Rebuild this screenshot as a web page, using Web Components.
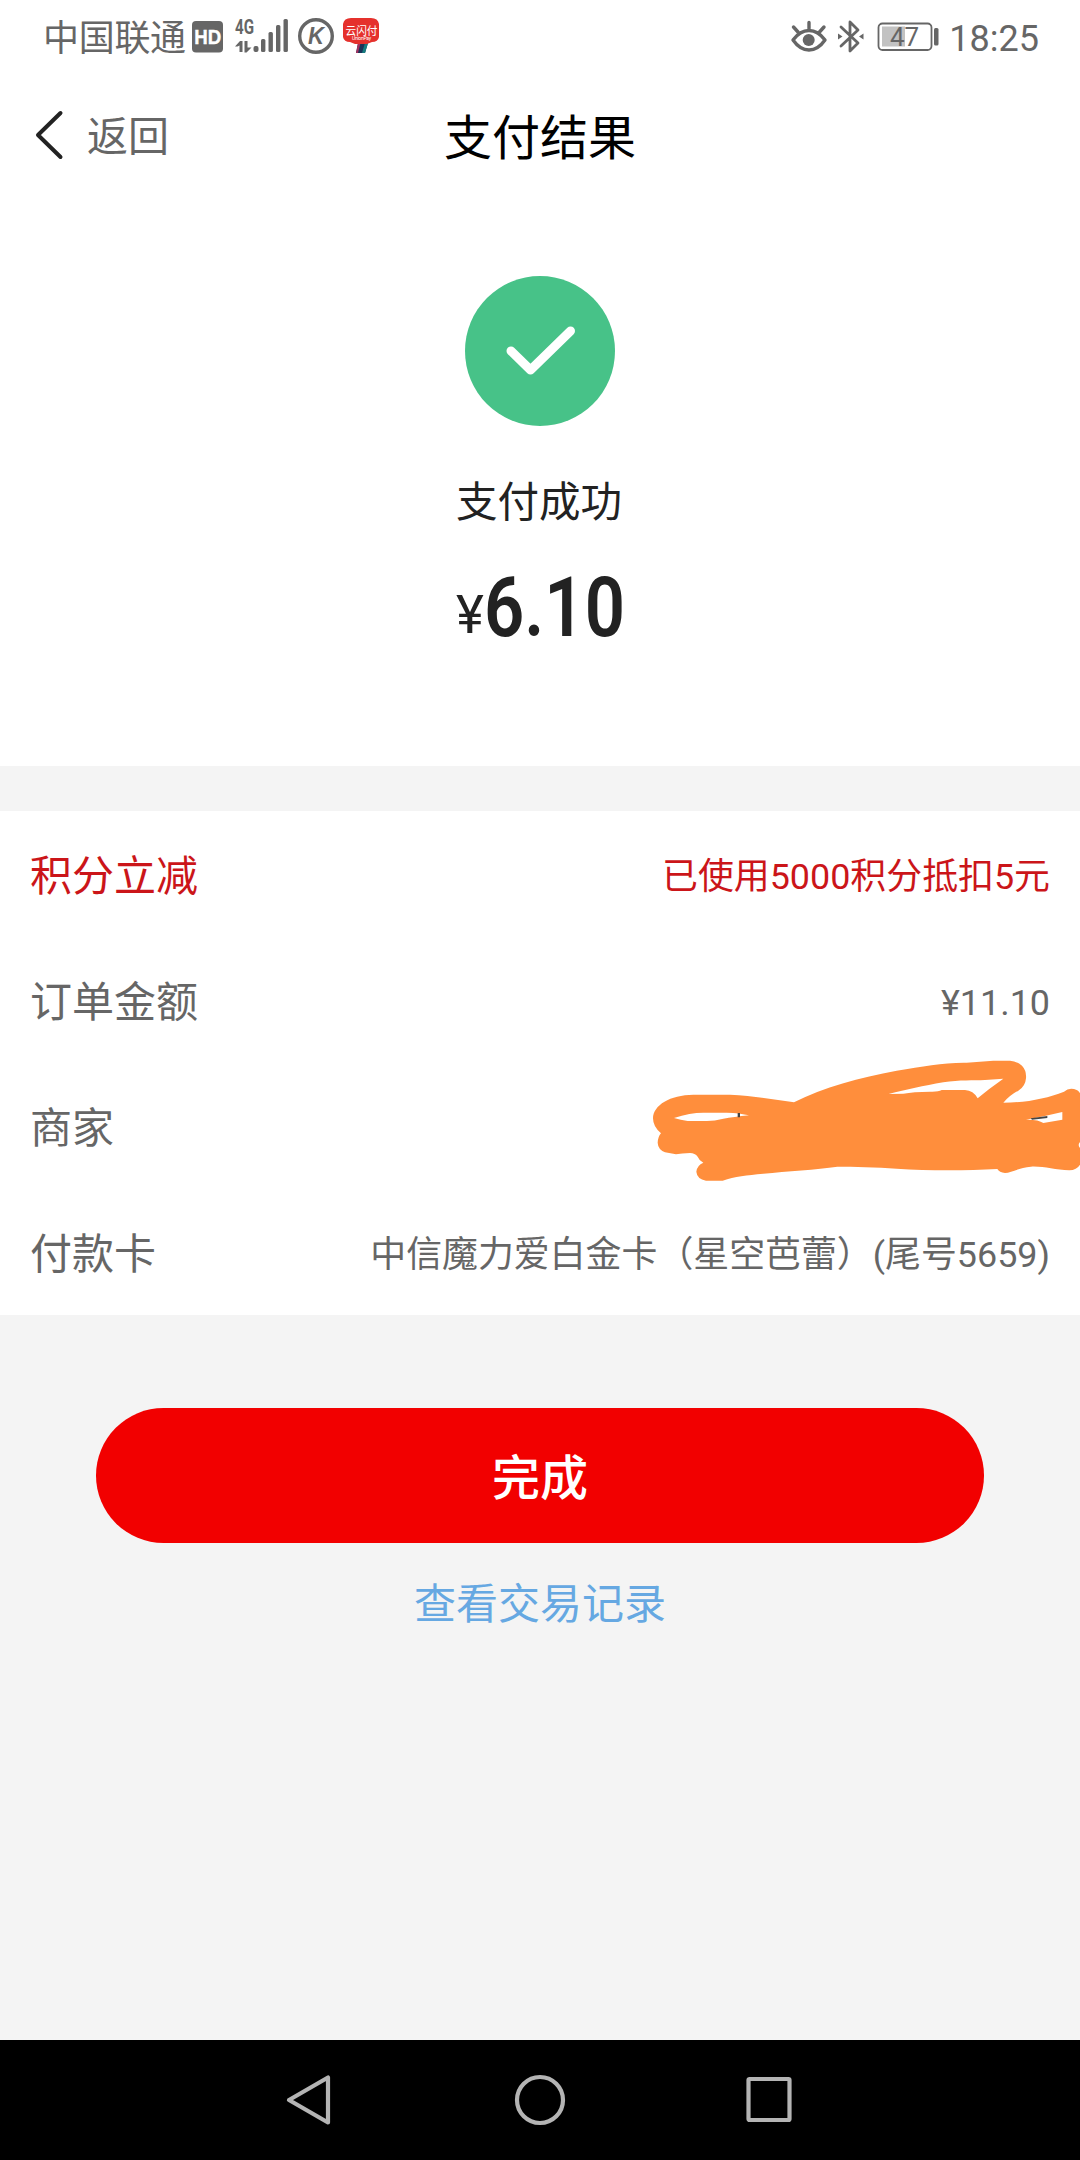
<!DOCTYPE html>
<html lang="zh-CN">
<head>
<meta charset="utf-8">
<title>支付结果</title>
<style>
  html, body { margin:0; }
  body {
    width:1080px;
    background:#f4f4f4;
    font-family:Roboto,"Noto Sans CJK SC",sans-serif;
    color:#666;
  }
</style>
</head>
<body>
<pay-screen></pay-screen>

<script>
const define = (name, html) => {
  const tpl = document.createElement("template");
  tpl.innerHTML = html;
  customElements.define(name, class extends HTMLElement {
    constructor(){
      super();
      this.attachShadow({ mode:"open" }).append(tpl.content.cloneNode(true));
    }
  });
};

define("status-bar", `
  <style>
    :host{
      display:flex;
      justify-content:space-between;
      align-items:center;
      box-sizing:border-box;
      height:74px;
      padding:0 41px 0 43px;
      font-size:36px;
      line-height:74px;
      color:#666;
    }
    .side{ display:flex; align-items:center; height:74px; }
    .side span{ padding-top:3px; }
    svg{ display:block; flex:none; }
    .carrier{ width:142px; letter-spacing:-.3px; white-space:nowrap; }
    .icons{ margin-left:5px; }
  </style>
  <div class="side">
    <span class="carrier">中国联通</span>
    <svg class="icons" width="192" height="74" viewBox="190 0 192 74" fill="#666">
      <rect x="192" y="21" width="31" height="31.500" rx="4"/>
      <text x="207.700" y="44" text-anchor="middle" textLength="27" lengthAdjust="spacingAndGlyphs" fill="#fff" stroke="#fff" stroke-width=".4" font-family="Liberation Sans" font-weight="700" font-size="21">HD</text>
      <text x="235" y="34" textLength="19" lengthAdjust="spacingAndGlyphs" font-weight="700" font-size="20">4G</text>
      <path d="M235 46.500l5-5.500h2.500v11h-3v-6.500l-2 1zM244.500 41h3v6.500h4l-5 5h-2z"/>
      <rect x="253.500" y="46" width="5" height="6" rx="2"/>
      <rect x="261" y="39" width="4.400" height="13" rx="1.500"/>
      <rect x="268.500" y="32" width="4.400" height="20" rx="1.500"/>
      <rect x="276" y="25" width="4.400" height="27" rx="1.500"/>
      <rect x="283.500" y="19" width="4.400" height="33" rx="1.500"/>
      <circle cx="316" cy="36" r="16.300" fill="none" stroke="#666" stroke-width="3.400"/>
      <text x="316" y="44.300" text-anchor="middle" font-family="Liberation Sans" font-weight="700" font-style="italic" font-size="23" textLength="16" lengthAdjust="spacingAndGlyphs">K</text>
      <path d="M358 43h10l-3 10h-9z" fill="#1b3358"/>
      <path d="M358 43h2.500l-2.500 10h-2z" fill="#a3305f"/>
      <path d="M365 43h3l-3 10h-3z" fill="#167c80"/>
      <path d="M351 18h20q7 0 8 6v13q-1 5-7 5l-5 2h-12l-5-2q-6 0-7-5V24q1-6 8-6z" fill="#e5312d"/>
      <text x="361.500" y="34.500" text-anchor="middle" textLength="32" lengthAdjust="spacingAndGlyphs" fill="#fff" font-weight="400" font-size="11.500">云闪付</text>
      <text x="361.500" y="40" text-anchor="middle" fill="#fff" font-size="5" textLength="19">UnionPay</text>
    </svg>
  </div>
  <div class="side">
    <svg width="160" height="74" viewBox="789 0 160 74" fill="none" stroke="#666" stroke-linecap="round" stroke-linejoin="round">
      <path d="M793 40q7-9.500 16-9.500t16 9.500q-7 10-16 10t-16-10z" stroke-width="3.400"/>
      <circle cx="808.700" cy="40" r="6" fill="#666" stroke="none"/>
      <path d="M809 22.500v6M793.500 27l4.500 5M824 27l-4.500 5" stroke-width="3.400"/>
      <path d="M841 27l17 16-8 8V22l8 8-17 16" stroke-width="2.800"/>
      <path d="M838 33.500l4.500 3-4.500 3zM863.500 33.500l-4.500 3 4.500 3z" fill="#666" stroke="none"/>
      <rect x="878.500" y="23.500" width="53" height="26.500" rx="4" stroke-width="1.800"/>
      <rect x="882" y="26.500" width="23" height="20" fill="#c2c2c2" stroke="none"/>
      <rect x="934" y="28" width="4.500" height="17.500" rx="1.500" fill="#666" stroke="none"/>
      <text x="904.500" y="46" text-anchor="middle" fill="#666" stroke="none" font-size="26">47</text>
    </svg>
    <span>18:25</span>
  </div>
`);

define("nav-header", `
  <style>
    :host{
      display:grid;
      grid-template-columns:1fr auto 1fr;
      align-items:center;
      height:126px;
    }
    .back{
      display:flex;
      align-items:center;
      gap:23px;
      padding-left:34px;
      font-size:41px;
      line-height:63px;
    }
    .back svg{ margin-bottom:4px; }
    .back slot{ display:block; }
    h1{
      margin:0;
      padding-top:2px;
      font-size:48px;
      font-weight:400;
      line-height:63px;
      color:#000;
    }
  </style>
  <div class="back">
    <svg width="30" height="52" viewBox="0 0 30 52" fill="none" stroke="#222" stroke-width="4" stroke-linecap="round" stroke-linejoin="round">
      <path d="M26.500 4L4 26l22.500 22"/>
    </svg>
    <slot name="back"></slot>
  </div>
  <h1><slot></slot></h1>
`);

define("pay-result", `
  <style>
    :host{
      display:flex;
      flex-direction:column;
      align-items:center;
      box-sizing:border-box;
      height:566px;
      padding-top:76px;
      color:#222;
    }
    svg{ display:block; }
    .state{
      margin-top:47px;
      font-size:41.500px;
      line-height:60px;
      padding-right:2px;
    }
    .amount{
      display:flex;
      align-items:flex-start;
      margin-top:25px;
      height:100px;
      line-height:100px;
    }
    .sign{
      width:28px;
      padding-left:1px;
      font-size:53px;
      line-height:115px;
    }
    /* the figures are set narrow, like a DIN face */
    .num{
      width:141px;
      font-size:84px;
      font-weight:600;
      transform:scaleX(.84);
      transform-origin:left;
    }
  </style>
  <svg width="150" height="150" viewBox="0 0 150 150">
    <circle cx="75" cy="75" r="75" fill="#47c288"/>
    <path d="M46 75l19.500 19L105.500 55" fill="none" stroke="#fff" stroke-width="9" stroke-linecap="round" stroke-linejoin="round"/>
  </svg>
  <div class="state"><slot></slot></div>
  <div class="amount">
    <span class="sign">¥</span>
    <span class="num"><slot name="amount"></slot></span>
  </div>
`);

define("detail-row", `
  <style>
    :host{
      position:relative;
      display:flex;
      justify-content:space-between;
      align-items:center;
      box-sizing:border-box;
      height:126px;
      padding:5px 30px 0;
      font-size:35.900px;
      line-height:60px;
    }
    :host([accent]){ color:#cb1519; }
    .label{ font-size:42px; }
  </style>
  <span class="label"><slot name="label"></slot></span>
  <slot></slot>
`);

define("marker-scribble", `
  <style>
    :host{
      position:absolute;
      right:0;
      top:-23px;
      width:450px;
      height:160px;
    }
    svg{ display:block; }
  </style>
  <svg width="450" height="160" viewBox="0 0 1350 480">
    <path fill="#ff8e3c" d="M69 235C70 195 120 165 190 164H300C370 167 430 179 492 187C580 142 690 112 800 92C880 79 940 67 1010 68L1090 62H1140Q1160 64 1176 77Q1190 92 1188 115Q1186 140 1165 152Q1140 165 1120 188C1190 188 1250 175 1302 155Q1315 143 1332 147Q1345 150 1350 160V306Q1342 315 1350 324V374Q1340 390 1318 391C1275 390 1240 378 1203 380C1170 382 1145 398 1125 399Q1108 398 1102 387C1010 392 900 393 800 386C740 381 670 380 622 380C560 389 470 394 400 401C350 406 315 409 278 422H228Q201 417 199 395Q201 376 220 368Q207 361 203 350Q195 339 180 339Q155 340 138 343L105 337Q84 328 83 308Q84 290 93 280Q69 260 69 235z"/>
    <path fill="#fff" d="M132 234Q180 218 220 218H290Q330 219 357 226Q310 231 280 236Q250 244 225 243H173Q152 240 132 234zM776 162C830 148 880 138 940 127C990 119 1030 122 1065 120L1120 116Q1078 145 1043 175Q1030 151 1005 150H935Q925 156 900 155Q850 155 820 161zM1188 239Q1240 230 1297 216V239L1240 249Q1225 238 1188 239z"/>
    <path fill="#444" d="M323 219h7v13h-7zM1202 235l50-7v6l-46 5z"/>
  </svg>
`);

define("pay-actions", `
  <style>
    :host{
      display:flex;
      flex-direction:column;
      align-items:center;
      box-sizing:border-box;
      height:725px;
      padding-top:93px;
    }
    button{
      width:888px;
      height:135px;
      padding:0 0 4px;
      border:0;
      border-radius:68px;
      background:#f20000;
      color:#fff;
      font:500 48px Roboto,"Noto Sans CJK SC",sans-serif;
    }
    .link{
      margin-top:32px;
      font-size:42px;
      line-height:60px;
      color:#66a8e2;
    }
  </style>
  <button><slot></slot></button>
  <span class="link"><slot name="link"></slot></span>
`);

define("system-nav", `
  <style>
    :host{
      display:flex;
      justify-content:center;
      align-items:center;
      gap:178px;
      height:120px;
      background:#000;
    }
    svg{ fill:none; stroke:#b4b4b4; stroke-width:4.200; stroke-linejoin:round; }
  </style>
  <svg width="52" height="52"><path d="M44 3.500v45L5 26z"/></svg>
  <svg width="52" height="52"><circle cx="26" cy="26" r="23"/></svg>
  <svg width="52" height="52"><rect x="4.500" y="5" width="41" height="41" rx="1"/></svg>
`);

define("pay-screen", `
  <style>
    :host{
      display:flex;
      flex-direction:column;
      height:2160px;
    }
    .sheet{ background:#fff; }
    .details{ margin-top:45px; }
  </style>
  <div class="sheet">
    <status-bar></status-bar>
    <nav-header><span slot="back">返回</span>支付结果</nav-header>
    <pay-result>支付成功<span slot="amount">6.10</span></pay-result>
  </div>
  <div class="sheet details">
    <detail-row accent><span slot="label">积分立减</span>已使用5000积分抵扣5元</detail-row>
    <detail-row><span slot="label">订单金额</span>¥11.10</detail-row>
    <detail-row><span slot="label">商家</span><marker-scribble></marker-scribble></detail-row>
    <detail-row><span slot="label">付款卡</span>中信魔力爱白金卡（星空芭蕾）(尾号5659)</detail-row>
  </div>
  <pay-actions>完成<span slot="link">查看交易记录</span></pay-actions>
  <system-nav></system-nav>
`);
</script>
</body>
</html>
